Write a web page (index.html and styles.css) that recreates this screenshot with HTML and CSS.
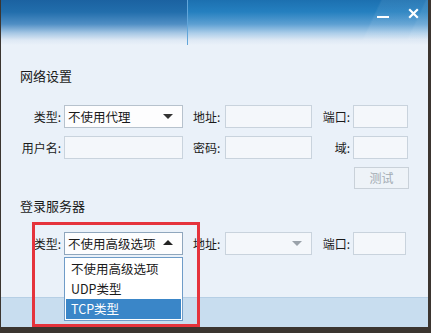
FILE: index.html
```html
<!DOCTYPE html>
<html lang="zh">
<head>
  <meta charset="UTF-8">
  <title>网络设置</title>
  <link rel="stylesheet" href="styles.css">
</head>
<body>
  <div class="window">
    <!-- 标题栏 -->
    <div class="titlebar">
      <div class="title-left"></div>
      <div class="title-right">
        <div class="shine"></div>
        <svg class="btn-min" width="12" height="4" viewBox="0 0 12 4"><rect x="0" y="1" width="12" height="2" fill="#fff"/></svg>
        <svg class="btn-close" width="11" height="11" viewBox="0 0 11 11"><path d="M1.2 1.2 L9.8 9.8 M9.8 1.2 L1.2 9.8" stroke="#fff" stroke-width="2.2"/></svg>
      </div>
    </div>

    <div class="content">
      <!-- 网络设置 -->
      <div class="heading first">网络设置</div>
      <div class="row">
        <span class="label l1">类型:</span>
        <div class="select f1"><span>不使用代理</span><i class="arrow down"></i></div>
        <span class="label l2">地址:</span>
        <div class="input f2"></div>
        <span class="label l3">端口:</span>
        <div class="input f3"></div>
      </div>
      <div class="row">
        <span class="label l1">用户名:</span>
        <div class="input f1"></div>
        <span class="label l2">密码:</span>
        <div class="input f2"></div>
        <span class="label l3">域:</span>
        <div class="input f3"></div>
      </div>
      <div class="row btn-row">
        <div class="test-btn">测试</div>
      </div>

      <!-- 登录服务器 -->
      <div class="heading second">登录服务器</div>
      <div class="row server-row">
        <span class="label l1">类型:</span>
        <div class="select open f1"><span>不使用高级选项</span><i class="arrow up"></i></div>
        <span class="label l2">地址:</span>
        <div class="input combo f2"><i class="arrow down gray"></i></div>
        <span class="label l3">端口:</span>
        <div class="input f3 short"></div>
      </div>
    </div>

    <div class="footer"></div>

    <!-- 下拉列表 -->
    <ul class="dropdown">
      <li>不使用高级选项</li>
      <li>UDP类型</li>
      <li class="selected">TCP类型</li>
    </ul>

    <!-- 红色标注框 -->
    <div class="mark"></div>
  </div>
</body>
</html>
```

FILE: styles.css
```css
* {
  box-sizing: border-box;
}

body {
  margin: 0;
  width: 431px;
  height: 333px;
  overflow: hidden;
  background-color: #3b3530;
  font-family: "Noto Sans CJK SC", "Noto Sans", sans-serif;
  font-size: 12px;
  color: #1a1a1a;
}

.window {
  position: relative;
  margin-left: 1px;
  width: 427px;
  height: 327px;
  background-color: #eaf1f9;
  display: flex;
  flex-direction: column;
}

/* 标题栏 */
.titlebar {
  height: 45px;
  display: flex;
}

.title-left {
  width: 187px;
  background: linear-gradient(to bottom, #1b62a1 0, #226eac 12px, #4f8ec4 24px, #a6c7e4 33px, #dde8f4 40px, #eaf1f9 45px);
  border-right: 1px solid #62a6da;
}

.title-right {
  position: relative;
  flex: 1;
  background: linear-gradient(to bottom, #1c70b0 0, #2580c0 12px, #5c9fd2 24px, #abcde9 33px, #dde8f4 40px, #eaf1f9 45px);
  overflow: hidden;
}

.shine {
  position: absolute;
  left: 130px;
  top: -10px;
  width: 200px;
  height: 50px;
  background: linear-gradient(115deg, rgba(255,255,255,0) 30%, rgba(255,255,255,0.07) 31%, rgba(255,255,255,0.07) 50%, rgba(255,255,255,0.13) 51%);
}

.btn-min {
  position: absolute;
  left: 189px;
  top: 15px;
}

.btn-close {
  position: absolute;
  left: 220px;
  top: 8px;
}

/* 内容 */
.content {
  flex: 1;
  padding-left: 19px;
}

.heading {
  font-size: 13px;
  line-height: 16px;
  height: 16px;
}

.heading.first {
  margin-top: 23px;
  margin-bottom: 21px;
}

.heading.second {
  margin-top: 9px;
  margin-bottom: 18px;
}

.row {
  display: flex;
  align-items: center;
  height: 23px;
  margin-bottom: 8px;
}

.label {
  line-height: 23px;
  white-space: nowrap;
}

.l1 {
  width: 41px;
  text-align: right;
  margin-right: 3px;
}

.l2 {
  width: 29px;
  margin-left: 10px;
  margin-right: 3px;
}

.l3 {
  width: 38px;
  text-align: right;
  margin-right: 3px;
}

.f1 { width: 119px; }
.f2 { width: 87px; }
.f3 { width: 55px; }
.f3.short { width: 53px; }

.input {
  position: relative;
  height: 23px;
  background-color: #f4f7fb;
  border: 1px solid #c9d3dd;
}

.select {
  position: relative;
  height: 23px;
  background-color: #fdfdfe;
  border: 1px solid #b7c2cd;
  padding-left: 3px;
  line-height: 21px;
  font-size: 12.5px;
}

.select.open {
  border-color: #8fa6bd;
}

.arrow {
  position: absolute;
  right: 9px;
  top: 8px;
  width: 0;
  height: 0;
  border-left: 5px solid transparent;
  border-right: 5px solid transparent;
}

.arrow.down {
  border-top: 5px solid #333;
}

.arrow.up {
  border-bottom: 5px solid #222;
  top: 7px;
}

.arrow.gray {
  border-top-color: #9aa2aa;
}

.btn-row {
  justify-content: flex-end;
  margin-bottom: 0;
  padding-right: 19px;
  height: 22px;
}

.test-btn {
  width: 55px;
  height: 22px;
  border: 1px solid #c9d1d9;
  background-color: #eef3f8;
  color: #a3abb3;
  text-align: center;
  line-height: 20px;
}

/* 底部栏 */
.footer {
  height: 30px;
  background-color: #c8ddef;
  border-top: 1px solid #b6cfe5;
}

/* 下拉列表 */
.dropdown {
  position: absolute;
  left: 63px;
  top: 257px;
  width: 119px;
  margin: 0;
  padding: 1px;
  list-style: none;
  background-color: #fff;
  border: 1px solid #6f9cc8;
}

.dropdown li {
  height: 20px;
  line-height: 20px;
  padding-left: 5px;
  font-size: 12.5px;
}

.dropdown li.selected {
  background-color: #3a86c8;
  color: #fff;
}

/* 红色标注 */
.mark {
  position: absolute;
  left: 31px;
  top: 222px;
  width: 168px;
  height: 105px;
  border: 3px solid #e5333c;
}
```
